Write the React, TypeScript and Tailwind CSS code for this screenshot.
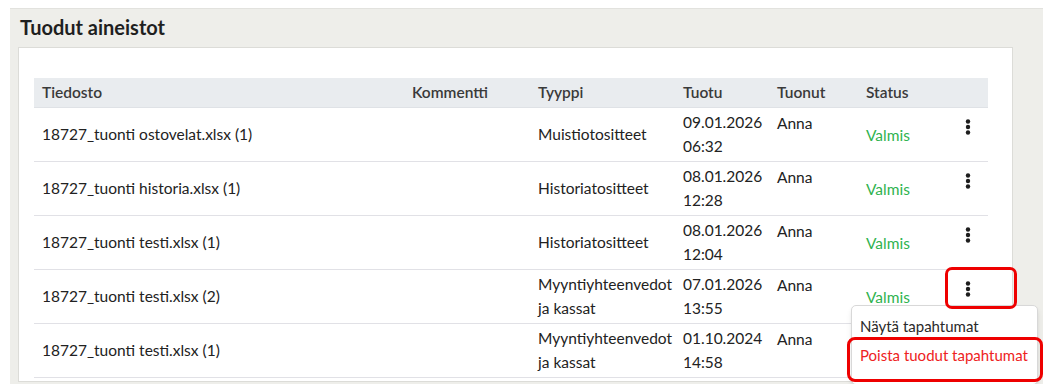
type Row = {
  file: string
  type: string[]
  date: string
  time: string
  user: string
  status: string
}

const rows: Row[] = [
  { file: "18727_tuonti ostovelat.xlsx (1)", type: ["Muistiotositteet"], date: "09.01.2026", time: "06:32", user: "Anna", status: "Valmis" },
  { file: "18727_tuonti historia.xlsx (1)", type: ["Historiatositteet"], date: "08.01.2026", time: "12:28", user: "Anna", status: "Valmis" },
  { file: "18727_tuonti testi.xlsx (1)", type: ["Historiatositteet"], date: "08.01.2026", time: "12:04", user: "Anna", status: "Valmis" },
  { file: "18727_tuonti testi.xlsx (2)", type: ["Myyntiyhteenvedot", "ja kassat"], date: "07.01.2026", time: "13:55", user: "Anna", status: "Valmis" },
  { file: "18727_tuonti testi.xlsx (1)", type: ["Myyntiyhteenvedot", "ja kassat"], date: "01.10.2024", time: "14:58", user: "Anna", status: "Valmis" },
]

function Kebab() {
  return (
    <svg width="6" height="16" viewBox="0 0 6 16" className="text-[#1d1d1d]">
      <circle cx="3" cy="2.5" r="2.2" fill="currentColor" />
      <circle cx="3" cy="8" r="2.2" fill="currentColor" />
      <circle cx="3" cy="13.5" r="2.2" fill="currentColor" />
    </svg>
  )
}

export default function App() {
  return (
    <div className="w-[1054px] h-[392px] bg-white pt-2 pl-[10px] overflow-hidden text-[#222]" style={{ fontFamily: "Lato, 'Open Sans', sans-serif" }}>
      <div className="w-[1033px] h-[376px] bg-[#eeeeea] border-t border-[#e2e2de] pt-[5px] pl-2 overflow-hidden">
        <h2 className="pl-[2px] text-[20px] leading-[26px] font-bold text-[#1f1f1f]">Tuodut aineistot</h2>
        <div className="mt-[7px] w-[995px] bg-white border border-[#dcdcd8] pt-[30px] pl-[15px] pb-[3px]">
          <div className="relative w-[954px]">
            <table className="w-[954px] table-fixed border-collapse text-[15.5px]">
              <colgroup>
                <col className="w-[370px]" />
                <col className="w-[126px]" />
                <col className="w-[145px]" />
                <col className="w-[94px]" />
                <col className="w-[89px]" />
                <col className="w-[88px]" />
                <col className="w-[42px]" />
              </colgroup>
              <thead>
                <tr className="h-[29px] bg-[#e9ecef] text-left text-[#3a3a3a] border-b border-[#dfe2e6]">
                  <th className="px-2 font-semibold">Tiedosto</th>
                  <th className="px-2 font-semibold">Kommentti</th>
                  <th className="px-2 font-semibold">Tyyppi</th>
                  <th className="px-2 font-semibold">Tuotu</th>
                  <th className="px-2 font-semibold">Tuonut</th>
                  <th className="px-2 font-semibold">Status</th>
                  <th></th>
                </tr>
              </thead>
              <tbody>
                {rows.map((r, i) => (
                  <tr key={i} className="h-[54px] border-b border-[#e1e1e6] leading-[24px]">
                    <td className="px-2 align-middle whitespace-nowrap">{r.file}</td>
                    <td className="px-2"></td>
                    <td className="px-2 align-middle">
                      {r.type.map((t) => (
                        <div key={t}>{t}</div>
                      ))}
                    </td>
                    <td className="px-2 align-middle">
                      <div>{r.date}</div>
                      <div>{r.time}</div>
                    </td>
                    <td className="px-2 align-top pt-[3px]">{r.user}</td>
                    <td className="px-2 align-middle pt-[2px] text-[#30b34f]">{r.status}</td>
                    <td className="align-top pt-[11px]">
                      <div className="flex justify-center pl-[2px]">
                        <Kebab />
                      </div>
                    </td>
                  </tr>
                ))}
              </tbody>
            </table>

            {/* dropdown menu for row 4 */}
            <div className="absolute left-[817px] top-[227px] w-[187px] h-[80px] bg-white border border-[#d8d8d8] rounded-[5px] shadow-md pt-[6px] text-[15px] leading-[29px] whitespace-nowrap">
              <div className="px-2 text-[#2a2a2a]">Näytä tapahtumat</div>
              <div className="px-2 text-[#ee2222]">Poista tuodut tapahtumat</div>
            </div>

            {/* annotation highlights */}
            <div className="absolute left-[911px] top-[189px] w-[72px] h-[42px] border-[3px] border-[#ee0000] rounded-[7px]"></div>
            <div className="absolute left-[813px] top-[259px] w-[196px] h-[45px] border-[3px] border-[#ee0000] rounded-[8px]"></div>
          </div>
        </div>
      </div>
    </div>
  )
}
